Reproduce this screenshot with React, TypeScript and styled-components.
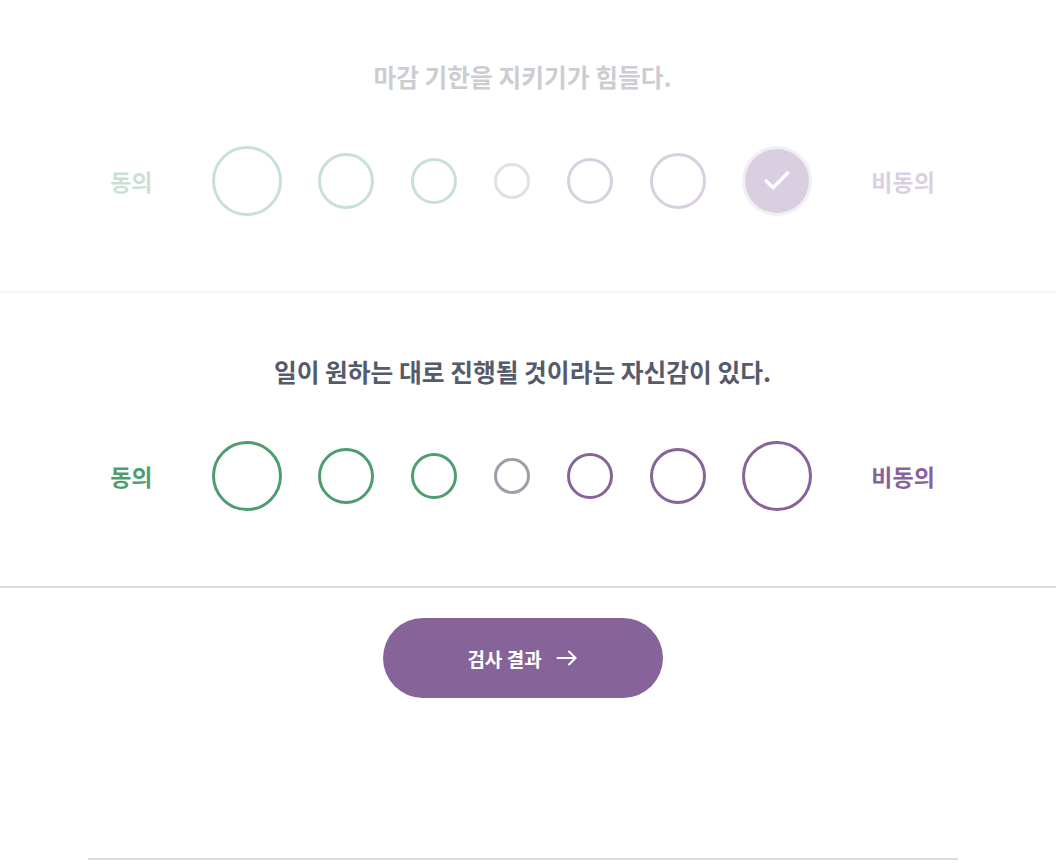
import React, { useState } from 'react';
import styled, { createGlobalStyle, css } from 'styled-components';
import { Check } from 'lucide-react';

const colors = {
    agree: '#4e9d70',
    disagree: '#86649a',
    neutral: '#9c9ea8',
    text: '#555b6a',
    line: '#dcdce0',
    white: '#ffffff',
};

const GlobalStyle = createGlobalStyle`
    body {
        margin: 0;
        background: ${colors.white};
        font-family: 'Noto Sans CJK KR', 'Noto Sans', sans-serif;
    }
`;

const Page = styled.div`
    padding-right: 11px;
    margin-top: -2px;
    display: flex;
    flex-direction: column;
    align-items: center;
`;

const Question = styled.section<{ $faded: boolean }>`
    align-self: stretch;
    display: flex;
    flex-direction: column;
    align-items: center;
    padding: 63px 11px 75px 0;
    margin-right: -11px;
    border-bottom: solid 2px ${colors.line};
    opacity: ${(p) => (p.$faded ? 0.3 : 1)};
`;

const Title = styled.div`
    color: ${colors.text};
    font-size: 24.75px;
    line-height: 30px;
    font-weight: bold;
`;

const Scale = styled.div`
    margin-top: 55px;
    height: 70px;
    display: flex;
    align-items: center;
    gap: 59px;
`;

const Side = styled.span<{ $tone: 'agree' | 'disagree' }>`
    color: ${(p) => colors[p.$tone]};
    font-size: 23px;
    font-weight: bold;
`;

const Options = styled.div`
    display: flex;
    align-items: center;
    gap: 36.8px;
`;

const Option = styled.button<{ $size: number; $tone: 'agree' | 'disagree' | 'neutral'; $checked: boolean }>`
    box-sizing: border-box;
    width: ${(p) => p.$size}px;
    height: ${(p) => p.$size}px;
    border-radius: 50%;
    border: solid 3px ${(p) => colors[p.$tone]};
    background: transparent;
    padding: 0;
    display: flex;
    align-items: center;
    justify-content: center;
    color: ${colors.white};
    cursor: pointer;
    ${(p) =>
        p.$checked &&
        css`
            background: ${colors[p.$tone]};
            border-color: ${colors[p.$tone]}55;
            background-clip: padding-box;
        `}
`;

const Submit = styled.button`
    margin-top: 30px;
    width: 280px;
    height: 80px;
    border: 0;
    border-radius: 40px;
    background: ${colors.disagree};
    color: ${colors.white};
    font-family: inherit;
    font-size: 19px;
    font-weight: bold;
    display: flex;
    align-items: center;
    justify-content: center;
    gap: 14px;
    cursor: pointer;
`;

const Footer = styled.div`
    margin-top: 160px;
    width: 870px;
    border-top: solid 2px ${colors.line};
`;

const Arrow = () => (
    <svg width="22" height="16" viewBox="0 0 22 16" fill="none" stroke="currentColor" strokeWidth="2" strokeLinecap="round" strokeLinejoin="round">
        <path d="M1.5 8h18" />
        <path d="M13 1.5 19.5 8 13 14.5" />
    </svg>
);

const scale: { size: number; tone: 'agree' | 'disagree' | 'neutral' }[] = [
    { size: 70, tone: 'agree' },
    { size: 56, tone: 'agree' },
    { size: 46, tone: 'agree' },
    { size: 36, tone: 'neutral' },
    { size: 46, tone: 'disagree' },
    { size: 56, tone: 'disagree' },
    { size: 70, tone: 'disagree' },
];

const questions = ['마감 기한을 지키기가 힘들다.', '일이 원하는 대로 진행될 것이라는 자신감이 있다.'];

export default function App() {
    const [answers, setAnswers] = useState<(number | null)[]>([6, null]);
    const active = answers.findIndex((a) => a === null);
    return (
        <>
            <GlobalStyle />
            <Page>
                {questions.map((q, qi) => (
                    <Question key={qi} $faded={qi !== active}>
                        <Title>{q}</Title>
                        <Scale>
                            <Side $tone="agree">동의</Side>
                            <Options>
                                {scale.map((s, i) => (
                                    <Option
                                        key={i}
                                        $size={s.size}
                                        $tone={s.tone}
                                        $checked={answers[qi] === i}
                                        onClick={() => setAnswers(answers.map((a, j) => (j === qi ? i : a)))}
                                    >
                                        {answers[qi] === i && <Check size={32} strokeWidth={2.6} />}
                                    </Option>
                                ))}
                            </Options>
                            <Side $tone="disagree">비동의</Side>
                        </Scale>
                    </Question>
                ))}
                <Submit>
                    검사 결과
                    <Arrow />
                </Submit>
                <Footer />
            </Page>
        </>
    );
}
